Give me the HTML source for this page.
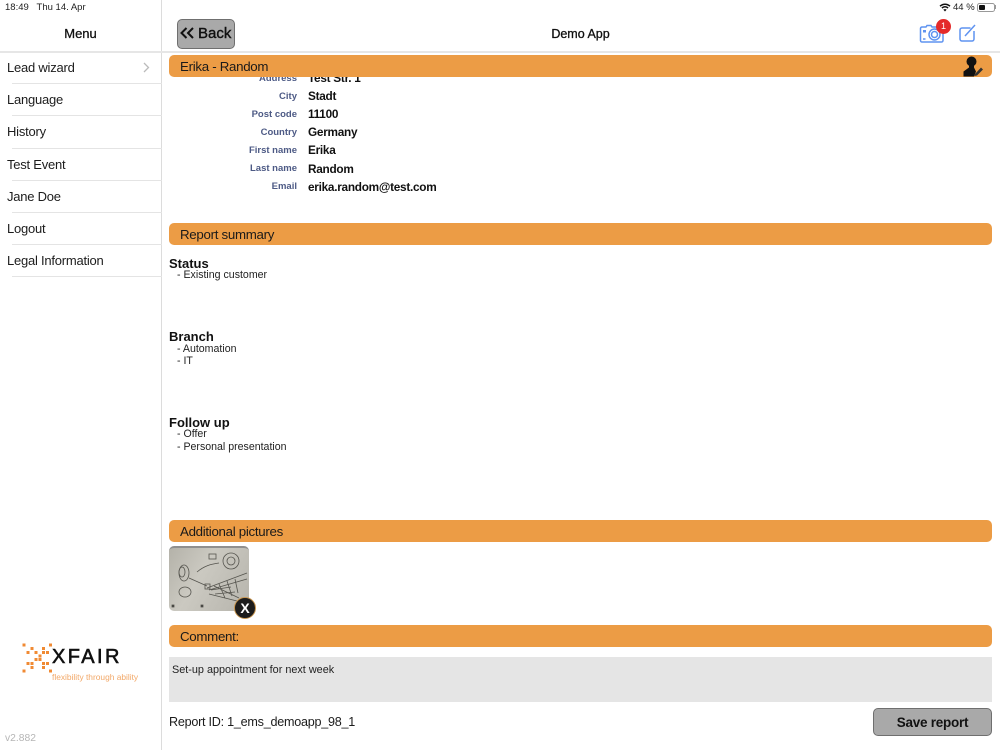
<!DOCTYPE html>
<html><head><meta charset="utf-8">
<style>
html,body{margin:0;padding:0;background:#fff;width:1000px;height:750px;overflow:hidden;font-family:"Liberation Sans",sans-serif;color:#111}
.a{position:absolute;white-space:nowrap}
.bar{position:absolute;left:169px;width:823px;height:22px;background:#ec9c45;border-radius:5px;font-size:13.3px;letter-spacing:-.3px;line-height:23px;text-indent:11px;color:#1a1a1a;}
.m{position:absolute;left:7px;font-size:13px;letter-spacing:-.23px;line-height:16px;color:#1c1c1c}
.ml{position:absolute;left:12px;width:150px;height:1px;background:#e4e4e4}
.lb{position:absolute;width:120px;left:177px;text-align:right;font-size:9.5px;font-weight:bold;color:#4d5a85;line-height:12px}
.v{position:absolute;left:308px;font-size:11.8px;letter-spacing:-.27px;font-weight:bold;color:#111;line-height:14px}
.h{position:absolute;left:169px;font-size:13px;font-weight:bold;line-height:16px;color:#111}
.s{position:absolute;left:177px;font-size:10.6px;line-height:13px;color:#222}
</style></head><body>
<div class="a" style="left:0;top:0;width:161px;height:750px;border-right:1px solid #dcdcdc"></div>
<div class="a" style="left:0;top:51px;width:1000px;height:2px;background:#e6e6e6"></div>
<div class="a" style="left:5px;top:2px;font-size:9.5px;line-height:11px;color:#222">18:49 &nbsp; Thu 14. Apr</div>

<svg class="a" style="left:939px;top:3px" width="12" height="9" viewBox="0 0 12 9"><path d="M1 3.2C4 .6 8 .6 11 3.2" fill="none" stroke="#111" stroke-width="1.5"/><path d="M2.9 5C4.8 3.5 7.2 3.5 9.1 5" fill="none" stroke="#111" stroke-width="1.5"/><path d="M6 8.5L4.3 6.6C5.3 5.9 6.7 5.9 7.7 6.6Z" fill="#111"/></svg>
<div class="a" style="left:953px;top:2px;font-size:9.5px;line-height:11px;color:#222">44 %</div>
<div class="a" style="left:977px;top:3px;width:16px;height:7px;border:1px solid #999;border-radius:2.5px"><div style="position:absolute;left:1px;top:1px;width:6px;height:5px;background:#111;border-radius:1px"></div></div>
<div class="a" style="left:995px;top:5px;width:1px;height:4px;background:#999"></div>

<div class="a" style="left:0;top:26px;width:161px;text-align:center;font-size:13px;line-height:16px;color:#111;-webkit-text-stroke:.3px #111">Menu</div>
<div class="a" style="left:177px;top:19px;width:56px;height:28px;background:#a9a9a9;border:1px solid #6f6f6f;border-radius:5px;box-sizing:content-box"></div>
<svg class="a" style="left:180px;top:27px" width="15" height="12" viewBox="0 0 15 12"><path d="M6.5 1L1.5 6L6.5 11M13 1L8 6L13 11" fill="none" stroke="#111" stroke-width="2"/></svg>
<div class="a" style="left:198px;top:25px;font-size:15px;line-height:18px;color:#111;-webkit-text-stroke:.4px #111">Back</div>
<div class="a" style="left:161px;top:26px;width:839px;text-align:center;font-size:12.5px;line-height:16px;color:#111;-webkit-text-stroke:.3px #111">Demo App</div>

<svg class="a" style="left:919px;top:24px" width="26" height="19" viewBox="0 0 26 19" fill="none" stroke="#5f93f0" stroke-width="1.5"><path d="M3 3H7L8 1.5H12L13 3H22.5A1.5 1.5 0 0 1 24 4.5V16.5A1.5 1.5 0 0 1 22.5 18H3A1.5 1.5 0 0 1 1.5 16.5V4.5A1.5 1.5 0 0 1 3 3Z"/><circle cx="15.5" cy="10.5" r="5.5"/><circle cx="15.5" cy="10.5" r="3"/><rect x="4" y="6" width="3" height="2.5" fill="#5f93f0" stroke="none"/><path d="M4 15h2.5"/></svg>
<div class="a" style="left:936px;top:19px;width:15px;height:15px;border-radius:50%;background:#e42a2a;color:#fff;font-size:9px;line-height:15px;text-align:center">1</div>
<svg class="a" style="left:959px;top:24px" width="18" height="18" viewBox="0 0 18 18" fill="none" stroke="#5f93f0" stroke-width="1.5"><path d="M11.5 4H3A2 2 0 0 0 1 6V15A2 2 0 0 0 3 17H13A2 2 0 0 0 15 15V7"/><path d="M6 12L16 1"/></svg>

<div class="m" style="top:60px">Lead wizard</div>
<svg class="a" style="left:142px;top:62px" width="8" height="11" viewBox="0 0 8 11"><path d="M2 1L6.5 5.5L2 10" fill="none" stroke="#bbb" stroke-width="1.3"/></svg>
<div class="ml" style="top:83px"></div>
<div class="m" style="top:92px">Language</div>
<div class="ml" style="top:115px"></div>
<div class="m" style="top:124px">History</div>
<div class="ml" style="top:148px"></div>
<div class="m" style="top:157px">Test Event</div>
<div class="ml" style="top:180px"></div>
<div class="m" style="top:189px">Jane Doe</div>
<div class="ml" style="top:212px"></div>
<div class="m" style="top:221px">Logout</div>
<div class="ml" style="top:244px"></div>
<div class="m" style="top:253px">Legal Information</div>
<div class="ml" style="top:276px"></div>

<svg class="a" style="left:20px;top:641px" width="34" height="34" viewBox="0 0 34 34" fill="#f08a33">
<rect x="2.5" y="2.5" width="3" height="3"/><rect x="10.5" y="6" width="3" height="3"/><rect x="6.5" y="10" width="3" height="3"/><rect x="14.5" y="10" width="3" height="3"/><rect x="22" y="6" width="3" height="3"/><rect x="29" y="2.5" width="3" height="3"/><rect x="22" y="10" width="3" height="3"/><rect x="26" y="10" width="3" height="3"/><rect x="18.5" y="13.5" width="3" height="3"/><rect x="14.5" y="17" width="3" height="3"/><rect x="18.5" y="17" width="3" height="3"/><rect x="6.5" y="21" width="3" height="3"/><rect x="10.5" y="21" width="3" height="3"/><rect x="22" y="21" width="3" height="3"/><rect x="26" y="21" width="3" height="3"/><rect x="10.5" y="25" width="3" height="3"/><rect x="22" y="25" width="3" height="3"/><rect x="2.5" y="28.5" width="3" height="3"/><rect x="29" y="28.5" width="3" height="3"/></svg>
<div class="a" style="left:52px;top:645px;font-size:20px;line-height:24px;color:#111;letter-spacing:2.4px;-webkit-text-stroke:.6px #111">XFAIR</div>
<div class="a" style="left:52px;top:672px;font-size:8.4px;line-height:11px;color:#f2a868">flexibility through ability</div>
<div class="a" style="left:5px;top:733px;font-size:10.3px;line-height:12px;color:#b5b5b5">v2.882</div>

<div class="a" style="left:308px;top:53px;width:70px;height:3px;overflow:hidden;font-size:11.8px;font-weight:bold;line-height:14px;color:#555">Test Ltd. Ltd</div>
<div class="v" style="top:71px">Test Str. 1</div>
<div class="lb" style="top:73px">Address</div>
<div class="bar" style="top:55px">Erika - Random</div>
<svg class="a" style="left:961px;top:55px" width="23" height="23" viewBox="0 0 23 23"><circle cx="10.5" cy="6.5" r="5" fill="#111"/><path d="M8 10L8 12.5L2.5 16.5V21.5H13L15 16.5L13 12.5L13 10Z" fill="#111"/><path d="M14 19L20 12.5L22 14.5L16 20.5L13.5 21Z" fill="#333"/></svg>

<div class="lb" style="top:91px">City</div><div class="v" style="top:89px">Stadt</div>
<div class="lb" style="top:109px">Post code</div><div class="v" style="top:107px">11100</div>
<div class="lb" style="top:127px">Country</div><div class="v" style="top:125px">Germany</div>
<div class="lb" style="top:145px">First name</div><div class="v" style="top:143px">Erika</div>
<div class="lb" style="top:163px">Last name</div><div class="v" style="top:162px">Random</div>
<div class="lb" style="top:181px">Email</div><div class="v" style="top:180px">erika.random@test.com</div>

<div class="bar" style="top:223px">Report summary</div>
<div class="h" style="top:256px">Status</div>
<div class="s" style="top:269px">- Existing customer</div>
<div class="h" style="top:329px">Branch</div>
<div class="s" style="top:343px">- Automation</div>
<div class="s" style="top:355px">- IT</div>
<div class="h" style="top:415px">Follow up</div>
<div class="s" style="top:428px">- Offer</div>
<div class="s" style="top:441px">- Personal presentation</div>

<div class="bar" style="top:520px">Additional pictures</div>
<div class="a" style="left:169px;top:546px;width:80px;height:65px;border-radius:5px;background:linear-gradient(120deg,#b4b2a9 0%,#cbc9c1 40%,#b6b4ac 100%);overflow:hidden;border-top:2px solid #8f8f8f;box-sizing:border-box">
<svg width="80" height="63" viewBox="0 0 80 63" fill="none" stroke="#55544e" stroke-width=".8"><ellipse cx="15" cy="25" rx="5" ry="8"/><ellipse cx="13" cy="24" rx="3" ry="5"/><ellipse cx="16" cy="44" rx="6" ry="5"/><circle cx="62" cy="13" r="8"/><circle cx="62" cy="13" r="4"/><rect x="40" y="6" width="7" height="5"/><path d="M38 40L78 25M40 42L78 31M40 46L72 54M45 38L70 50M42 42L62 39M46 46L66 44M50 36L56 50M58 33L63 48M66 31L69 45"/><rect x="36" y="36" width="5" height="5"/><path d="M28 24C35 18 42 16 50 15M20 30L38 38"/><rect x="3" y="57" width="2" height="2" fill="#333"/><rect x="32" y="57" width="2" height="2" fill="#333"/></svg></div>
<div class="a" style="left:234px;top:597px;width:20px;height:20px;border-radius:50%;background:#1c1c1c;border:1px solid #c9964f;color:#fff;font-size:14px;font-weight:bold;line-height:20px;text-align:center">X</div>

<div class="bar" style="top:625px">Comment:</div>
<div class="a" style="left:169px;top:657px;width:823px;height:45px;background:#e5e5e5"></div>
<div class="a" style="left:172px;top:664px;font-size:10.85px;line-height:13px;color:#222">Set-up appointment for next week</div>
<div class="a" style="left:169px;top:714px;font-size:12.6px;letter-spacing:-.25px;line-height:16px;color:#1c1c1c">Report ID: 1_ems_demoapp_98_1</div>
<div class="a" style="left:873px;top:708px;width:117px;height:26px;background:#a9a9a9;border:1px solid #6f6f6f;border-radius:5px;text-align:center;font-size:13.5px;letter-spacing:-.25px;font-weight:bold;line-height:27px;color:#111">Save report</div>
</body></html>
